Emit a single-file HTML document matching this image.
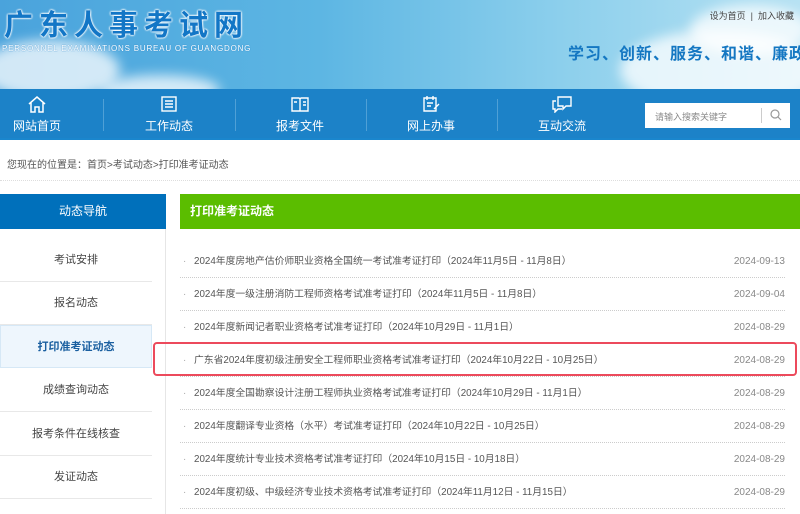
<!DOCTYPE html><html><head><meta charset="utf-8"><style>
*{margin:0;padding:0;box-sizing:border-box}
body{width:800px;height:514px;overflow:hidden;background:#fff;font-family:"Liberation Sans","Noto Sans CJK SC",sans-serif;position:relative}
.hd{position:absolute;left:0;top:0;width:800px;height:89px;background:linear-gradient(90deg,#4aa3dc 0%,#5db6e3 40%,#8ccfec 70%,#b7e2f3 100%)}
.cloud{position:absolute;border-radius:50%;background:rgba(255,255,255,.75);filter:blur(6px)}
.logo{position:absolute;left:4px;top:2px;font-size:29px;font-weight:bold;color:#1276c6;letter-spacing:6px;text-shadow:0 0 2px #fff,0 0 2px #fff,0 0 2px #fff;white-space:nowrap}
.en{position:absolute;left:2px;top:44px;font-size:8px;color:#fff;letter-spacing:.8px;text-shadow:0 0 1px #1a78c0;white-space:nowrap}
.top{position:absolute;right:6px;top:9px;font-size:9px;color:#444}
.slogan{position:absolute;left:568px;top:40px;font-size:16px;font-weight:bold;color:#1477c2;letter-spacing:1px;white-space:nowrap}
.nav{position:absolute;left:0;top:89px;width:800px;height:51px;background:#1c82c8;border-bottom:2px solid #1a86cd}
.ni{position:absolute;top:0;width:130px;text-align:center;color:#fff;font-size:12px}
.ni svg{display:block;margin:6px auto 4px}
.sep{position:absolute;top:10px;width:1px;height:32px;background:#4fa0d6}
.search{position:absolute;left:645px;top:103px;width:145px;height:25px;background:#fff;font-size:9px;color:#888;padding:7px 10px}
.bc{position:absolute;left:7px;top:156px;font-size:10px;color:#555}
.dl{position:absolute;left:0;top:180px;width:800px;border-top:1px dotted #ddd}
.sb{position:absolute;left:0;top:194px;width:166px}
.sbh{height:35px;background:#0070bb;color:#fff;font-size:12px;text-align:center;line-height:35px}
.sbi{position:absolute;left:0;width:152px;height:43px;text-align:center;font-size:11px;color:#444;line-height:43px;border-bottom:1px solid #e8e8e8}
.sbi.on{background:#eef6fd;border:1px solid #d6e8f6;color:#1a5fa0;font-weight:bold}
.vl{position:absolute;left:165px;top:229px;height:285px;border-left:1px solid #e6e6e6}
.mh{position:absolute;left:180px;top:194px;width:620px;height:35px;background:#5bbd00;color:#fff;font-size:12px;font-weight:bold;line-height:35px;padding-left:10px}
.row{position:absolute;left:180px;width:605px;height:33px;border-bottom:1px dotted #ccc;font-size:9.8px;color:#555;line-height:33px;padding-left:14px;white-space:nowrap}
.row:before{content:"·";position:absolute;left:3px;color:#aaa}
.row span{position:absolute;right:0;color:#888;font-size:10px}
.hl{position:absolute;left:153px;top:342px;width:644px;height:34px;border:2px solid #ec4a5c;border-radius:4px}
</style></head><body>
<div class="hd">
<div class="cloud" style="left:-20px;top:40px;width:140px;height:60px"></div>
<div class="cloud" style="left:100px;top:75px;width:120px;height:30px"></div>
<div class="cloud" style="left:620px;top:30px;width:200px;height:80px"></div>
<div class="cloud" style="left:690px;top:5px;width:120px;height:50px"></div>
<div class="logo">广东人事考试网</div>
<div class="en">PERSONNEL EXAMINATIONS BUREAU OF GUANGDONG</div>
<div class="top">设为首页 &nbsp;|&nbsp; 加入收藏</div>
<div class="slogan">学习、创新、服务、和谐、廉政</div>
</div>
<div class="nav">
<div class="ni" style="left:-28px"><svg width="20" height="18" viewBox="0 0 20 18" fill="none" stroke="#fff" stroke-width="1.5"><path d="M2 9L10 2L18 9M4 7V17H8V12H12V17H16V7"/></svg>网站首页</div>
<div class="sep" style="left:103px"></div>
<div class="ni" style="left:104px"><svg width="18" height="18" viewBox="0 0 18 18" fill="none" stroke="#fff" stroke-width="1.4"><rect x="2" y="2" width="14" height="14"/><path d="M5 6H13M5 9H13M5 12H13"/></svg>工作动态</div>
<div class="sep" style="left:235px"></div>
<div class="ni" style="left:235px"><svg width="20" height="18" viewBox="0 0 20 18" fill="none" stroke="#fff" stroke-width="1.4"><path d="M2 3H9L10 4L11 3H18V16H2Z M10 4V16M4 7H7M13 7H16M13 10H16"/></svg>报考文件</div>
<div class="sep" style="left:366px"></div>
<div class="ni" style="left:366px"><svg width="20" height="18" viewBox="0 0 20 18" fill="none" stroke="#fff" stroke-width="1.4"><path d="M3 3H15V16H3Z M6 1V5M12 1V5M6 8H12M6 11H10M13 14L18 9"/></svg>网上办事</div>
<div class="sep" style="left:497px"></div>
<div class="ni" style="left:497px"><svg width="22" height="18" viewBox="0 0 22 18" fill="none" stroke="#fff" stroke-width="1.4"><path d="M7 2H20V11H15L12 14V11H7Z M5 6H2V14H4V17L7 14H11"/></svg>互动交流</div>
</div>
<div class="search">请输入搜索关键字<span style="position:absolute;right:28px;top:5px;width:1px;height:15px;background:#ccc"></span><svg style="position:absolute;right:8px;top:6px" width="12" height="12" viewBox="0 0 12 12" fill="none" stroke="#999" stroke-width="1.2"><circle cx="5" cy="5" r="4"/><path d="M8 8L11 11"/></svg></div>
<div class="bc">您现在的位置是：首页&gt;考试动态&gt;打印准考证动态</div>
<div class="dl"></div>
<div class="sb"><div class="sbh">动态导航</div></div>
<div class="sbi" style="top:239px">考试安排</div>
<div class="sbi" style="top:282px">报名动态</div>
<div class="sbi on" style="top:325px">打印准考证动态</div>
<div class="sbi" style="top:369px">成绩查询动态</div>
<div class="sbi" style="top:413px">报考条件在线核查</div>
<div class="sbi" style="top:456px">发证动态</div>
<div class="vl"></div>
<div class="mh">打印准考证动态</div>
<div class="row" style="top:245px">2024年度房地产估价师职业资格全国统一考试准考证打印（2024年11月5日 - 11月8日）<span>2024-09-13</span></div>
<div class="row" style="top:278px">2024年度一级注册消防工程师资格考试准考证打印（2024年11月5日 - 11月8日）<span>2024-09-04</span></div>
<div class="row" style="top:311px">2024年度新闻记者职业资格考试准考证打印（2024年10月29日 - 11月1日）<span>2024-08-29</span></div>
<div class="row" style="top:344px">广东省2024年度初级注册安全工程师职业资格考试准考证打印（2024年10月22日 - 10月25日）<span>2024-08-29</span></div>
<div class="row" style="top:377px">2024年度全国勘察设计注册工程师执业资格考试准考证打印（2024年10月29日 - 11月1日）<span>2024-08-29</span></div>
<div class="row" style="top:410px">2024年度翻译专业资格（水平）考试准考证打印（2024年10月22日 - 10月25日）<span>2024-08-29</span></div>
<div class="row" style="top:443px">2024年度统计专业技术资格考试准考证打印（2024年10月15日 - 10月18日）<span>2024-08-29</span></div>
<div class="row" style="top:476px">2024年度初级、中级经济专业技术资格考试准考证打印（2024年11月12日 - 11月15日）<span>2024-08-29</span></div>
<div class="hl"></div>
</body></html>
